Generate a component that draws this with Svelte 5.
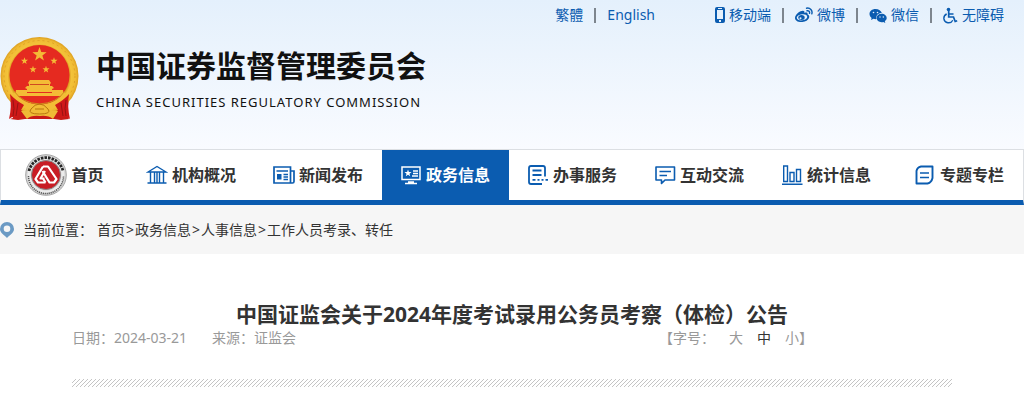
<script lang="ts">
	interface NavItem {
		label: string;
		icon: string;
	}

	const navItems: NavItem[] = [
		{ label: '首页', icon: 'home' },
		{ label: '机构概况', icon: 'bank' },
		{ label: '新闻发布', icon: 'news' },
		{ label: '政务信息', icon: 'screen' },
		{ label: '办事服务', icon: 'form' },
		{ label: '互动交流', icon: 'chat' },
		{ label: '统计信息', icon: 'chart' },
		{ label: '专题专栏', icon: 'doc' }
	];

	const crumbs = ['首页', '政务信息', '人事信息', '工作人员考录、转任'];
	const sizes = ['大', '中', '小'];

	let active = $state('screen');
	let fontSize = $state('中');

	function star(cx: number, cy: number, r: number): string {
		const points: string[] = [];
		for (let i = 0; i < 10; i++) {
			const radius = i % 2 ? r * 0.4 : r;
			const angle = (Math.PI * i) / 5 - Math.PI / 2;
			points.push(`${cx + radius * Math.cos(angle)},${cy + radius * Math.sin(angle)}`);
		}
		return points.join(' ');
	}
</script>

<header class="site-header">
	<div class="top-links">
		<div class="link-group">
			<a href="#tc">繁體</a>
			<i class="bar"></i>
			<a href="#en">English</a>
		</div>
		<div class="link-group">
			<a href="#mobile">
				<svg width="10" height="18" viewBox="0 0 10 18" aria-hidden="true">
					<path fill="#0b5cb0" fill-rule="evenodd" d="M2 1h6q2 0 2 2v12q0 2-2 2H2q-2 0-2-2V3q0-2 2-2zM2 4v9h6V4zM3 2v1h4V2zM4 14v2h2v-2z" />
				</svg>
				移动端
			</a>
			<i class="bar"></i>
			<a href="#weibo">
				<svg width="18" height="16" viewBox="0 0 18 16" aria-hidden="true">
					<path fill="#0b5cb0" fill-rule="evenodd" d="M7 4c1.700-.6 2.800.2 2.400 1.900 2-.8 3.700-.3 3.100 1.400 3.500 1.200 2 7.200-5.200 7.700C2.500 15.300 0 13.200 0 10.900 0 8 4.600 3.500 7 4zM7.200 7.200C3.800 7.500 1.600 9.300 1.800 11c.2 1.700 2.700 2.700 5.600 2.300 3.100-.4 5.100-2.200 4.800-3.900-.3-1.600-2.500-2.500-5-2.200z" />
					<ellipse cx="6.500" cy="10.500" rx="3.200" ry="2.500" fill="#0b5cb0" />
					<circle cx="5.500" cy="11.200" r="1" fill="#e9f2fc" />
					<path fill="none" stroke="#0b5cb0" stroke-width="1.400" stroke-linecap="round" d="M11.500 1.200c3.500-.8 6.400 2.200 5.300 5.700M12 3.800c1.700-.4 3 .9 2.500 2.600" />
				</svg>
				微博
			</a>
			<i class="bar"></i>
			<a href="#wechat">
				<svg width="18" height="16" viewBox="0 0 18 16" aria-hidden="true">
					<path fill="#0b5cb0" d="M6.500 2C2.900 2 .5 4.200.5 7c0 1.500.8 2.900 2.100 3.900L2 13l2.500-1.200c1 .3 2 .4 3 .3C6.700 8.500 9 6 12.800 6 12.200 3.700 9.800 2 6.500 2z" />
					<path fill="#0b5cb0" d="M12.600 6.800c-3 0-5 2-5 4.200s2 4.200 5 4.200c.6 0 1.200-.1 1.700-.3l2 1-.5-1.800c1.200-.8 1.900-1.900 1.900-3.100 0-2.200-2.200-4.200-5.100-4.200z" />
					<g fill="#e9f2fc"><circle cx="4.500" cy="5.500" r=".8" /><circle cx="8.500" cy="5.500" r=".8" /><circle cx="11" cy="10" r=".7" /><circle cx="14.300" cy="10" r=".7" /></g>
				</svg>
				微信
			</a>
			<i class="bar"></i>
			<a href="#access">
				<svg width="15" height="17" viewBox="0 0 15 17" aria-hidden="true">
					<circle cx="5.500" cy="2.500" r="1.800" fill="#0b5cb0" />
					<path fill="none" stroke="#0b5cb0" stroke-width="1.700" d="M5.700 4v6h4.800l1.700 4.500 2-.7M6 7h4.500" />
					<path fill="none" stroke="#0b5cb0" stroke-width="1.400" d="M3.700 7C1.500 8 .7 10 .9 11.800c.7 4.500 6.800 5.500 8.900 1.400" />
				</svg>
				无障碍
			</a>
		</div>
	</div>

	<div class="brand">
		<svg class="emblem" width="80" height="86" viewBox="0 0 80 86" aria-hidden="true">
			<defs>
				<radialGradient id="gold" cx=".5" cy=".5" r=".5">
					<stop offset=".76" stop-color="#d9951c" />
					<stop offset=".82" stop-color="#f3c33a" />
					<stop offset=".93" stop-color="#f0bb33" />
					<stop offset="1" stop-color="#dc9f20" />
				</radialGradient>
			</defs>
			<path fill="#c81a17" d="M11 60l2 22-3 1 8 1 7-1h29l7 1 8-1-2-4 2-19z" />
			<circle cx="39.500" cy="40" r="39" fill="url(#gold)" />
			<circle cx="39.500" cy="40" r="35.500" fill="none" stroke="#dfa126" stroke-width="1" stroke-dasharray="2 3" />
			<circle cx="39.500" cy="39" r="30" fill="#e52a20" />
			<g fill="#f4bb36">
				<polygon points={star(39.500, 18.500, 7.500)} />
				<polygon points={star(24.500, 25, 3.700)} />
				<polygon points={star(54, 25, 3.700)} />
				<polygon points={star(33, 33.500, 3.700)} />
				<polygon points={star(46, 33.500, 3.700)} />
				<path d="M30 44h19l2 3-1 1v2h2l2 2-2 1v3h-25v-3l-2-1 2-2h2v-2l-1-1z" />
				<path d="M15 53h12v3h25v-3h12v3H15z" opacity=".0" />
				<path d="M16 54h11v3h25v-3h11l1 6H15z" />
			</g>
			<path stroke="#cf4a20" stroke-width="1" d="M30 48.500h19" />
			<path fill="none" stroke="#f2bd35" stroke-width="7" d="M12 58q8 13 27.500 14Q59 71 67 58" />
			<path fill="none" stroke="#cf8f1c" stroke-width="1" d="M14 55q8 12 25.500 13Q57 67 65 55" />
			<g fill="#cf1918">
				<path d="M10 58q5 6 14 11l-3 5-4 8-5-1-3 2q3-12 1-25z" />
				<path d="M69 58q-5 6-14 11l3 5 3 8 6-1 3 2q-3-12-1-25z" />
			</g>
			<path stroke="#981313" stroke-width="1" fill="none" d="M13 64q2 9 0 16M18 67l-2 13M66 64q-2 9 0 16M61 67l2 13" />
			<path fill="#efba35" d="M21 75l13-1 5-3 6 3 13 1-5 8q-5-4-13-3-9-1-13 3z" />
			<path fill="none" stroke="#b8760f" d="M31 73q4-5 8.500-5t8.500 5-8.500 5-8.500-5zM35 73h9" />
		</svg>
		<div class="brand-text">
			<h1>中国证券监督管理委员会</h1>
			<p>CHINA SECURITIES REGULATORY COMMISSION</p>
		</div>
	</div>
</header>

<nav class="main-nav">
	{#each navItems as item}
		<a
			href="#{item.icon}"
			class:home={item.icon === 'home'}
			class:active={active === item.icon}
			onclick={() => (active = item.icon)}
		>
			{#if item.icon === 'home'}
				<svg width="42" height="42" viewBox="0 0 42 42" aria-hidden="true">
					<circle cx="21" cy="21" r="20.300" fill="#d6d6d6" stroke="#a5a5a5" />
					<circle cx="21" cy="21" r="17" fill="none" stroke="#ececec" stroke-width="3" />
					<path d="M4 17a17.500 17.500 0 0 1 34 0" fill="none" stroke="#252525" stroke-width="2.800" stroke-dasharray="2.600 1" />
					<path d="M3.500 22a17.500 17.500 0 0 0 35 0" fill="none" stroke="#555" stroke-width="1.500" stroke-dasharray="1.200 .8" />
					<circle cx="21" cy="21" r="14.500" fill="#c81c24" stroke="#888" />
					<g fill="none" stroke="#fff" stroke-width="2.200" stroke-linejoin="round">
						<path d="M18 12.500l-7.500 12.500 2.500 3.500h7.500" />
						<path d="M18 12.500h5l8.500 12.500-2.500 3.500h-4.500l-7-11.500" />
						<path d="M20 17l-4.500 7.500h4M20.500 28.500l-2.500-4" />
					</g>
				</svg>
			{:else}
				<svg width="22" height="20" viewBox="0 0 22 20" fill="none" stroke="currentColor" stroke-width="1.500" aria-hidden="true">
					{#if item.icon === 'bank'}
						<path d="M2 7L11 1.500 20 7zM4.500 7.500v10M8.500 7.500v10M13.500 7.500v10M17.500 7.500v10M11 7.500v10M1.500 18h19" stroke-width="1.400" />
					{:else if item.icon === 'news'}
						<path d="M1 2h16.500v16H1zM17.500 6H21v10.500q0 1.500-1.500 1.500h-2" stroke-width="1.700" />
						<path d="M3.500 6h11.500M10.500 9.500H15M10.500 12H15M10.500 14.500H15" />
						<path d="M4 9h4.500v5.500H4z" fill="currentColor" stroke="none" />
					{:else if item.icon === 'screen'}
						<path d="M2 2h18v12.500H2zM8 17h6M5 18.500h12" />
						<path d="M13 6h5M13 8.500h5M12 11h6" />
						<polygon points={star(8, 8.200, 3.800)} fill="currentColor" stroke="none" />
					{:else if item.icon === 'form'}
						<path d="M18 11.500V3q0-2-2-2H4Q2 1 2 3v14q0 2 2 2h11" stroke-width="1.800" />
						<path d="M5.500 5.500h9M5.500 10h9M5.500 14.800h3M10.500 14.800h2M14.500 14.800h2M18.500 14.800h2.500" stroke-width="1.800" />
					{:else if item.icon === 'chat'}
						<path d="M2 2h18.500v13H11l-3.500 3.500V15H2z" stroke-width="1.600" stroke-linejoin="round" />
						<path d="M5.500 6.500h11.500M5.500 10.500h7.500" stroke-width="1.600" />
					{:else if item.icon === 'chart'}
						<path d="M2.700 1h3.800v15.500H2.700zM9 7.500h4v9H9zM15.500 4.500h4v12h-4zM1 19.200h20.500" stroke-width="1.400" />
					{:else}
						<path d="M7 1.500h11.500v11.500q-1 4.500-5 5.500H2.500V6Q3 2.500 7 1.500z" stroke-width="1.900" stroke-linejoin="round" />
						<path d="M6 8h9M6 12.500h9" stroke-width="1.700" />
					{/if}
				</svg>
			{/if}
			{item.label}
		</a>
	{/each}
</nav>

<div class="breadcrumb">
	<svg width="14" height="18" viewBox="0 0 14 18" aria-hidden="true">
		<path fill="#6b9ac4" fill-rule="evenodd" d="M7 1a7 7 0 0 1 7 7c0 4-4 5.500-7 9-3-3.500-7-5-7-9a7 7 0 0 1 7-7zm0 3.500a3.300 3.300 0 1 0 0 6.600 3.300 3.300 0 0 0 0-6.600z" />
	</svg>
	<div class="location">
		<span>当前位置：</span>
		<div>
			{#each crumbs as crumb, i}{#if i > 0}<span class="sep">&gt;</span>{/if}<a href="#crumb-{i}">{crumb}</a>{/each}
		</div>
	</div>
</div>

<main class="article">
	<h2>中国证监会关于2024年度考试录用公务员考察（体检）公告</h2>
	<div class="meta">
		<div class="source">
			<span>日期：2024-03-21</span>
			<span>来源：证监会</span>
		</div>
		<div class="font-size">
			<span>【字号：</span>
			<div class="sizes">
				{#each sizes as size}
					<button type="button" class:selected={fontSize === size} onclick={() => (fontSize = size)}>{size}</button>
				{/each}
			</div>
			<span>】</span>
		</div>
	</div>
	<div class="divider"></div>
</main>

<style>
	:global(body) {
		margin: 0;
		background: #fff;
		color: #333;
		font-family: 'Noto Sans', 'Noto Sans CJK SC', sans-serif;
		font-size: 14px;
		line-height: 20px;
	}

	a {
		color: inherit;
		text-decoration: none;
	}

	svg {
		flex: none;
	}

	.site-header {
		background: linear-gradient(#e4f0fc, #f9fbff);
		padding-bottom: 27px;
	}

	.top-links {
		display: flex;
		justify-content: flex-end;
		gap: 60px;
		padding: 5px 20px 0 0;
		color: #0b5cb0;
	}

	.link-group {
		display: flex;
		align-items: center;
		gap: 11px;
	}

	.link-group a {
		display: flex;
		align-items: center;
		gap: 4px;
	}

	.bar {
		width: 2px;
		height: 15px;
		background: #7d858e;
	}

	.brand {
		display: flex;
		align-items: center;
		gap: 16px;
		padding-top: 11px;
	}

	.brand-text {
		color: #111;
	}

	h1 {
		margin: 0;
		font-size: 30px;
		line-height: 40px;
	}

	.brand-text p {
		margin: 6px 0 0;
		font-size: 13px;
		letter-spacing: 1px;
	}

	.main-nav {
		display: grid;
		grid-template-columns: repeat(7, 127px) 1fr;
		border: 1px solid #dcdfe3;
		border-bottom: 5px solid #0b5cb0;
	}

	.main-nav a {
		display: flex;
		align-items: center;
		justify-content: flex-end;
		gap: 4px;
		height: 50px;
		padding-right: 19px;
		font-size: 16px;
		font-weight: 700;
		white-space: nowrap;
	}

	.main-nav .home {
		justify-content: center;
		padding: 0;
	}

	.main-nav svg {
		color: #0b5cb0;
	}

	.main-nav .active,
	.main-nav .active svg {
		background: #0b5cb0;
		color: #fff;
	}

	.breadcrumb {
		display: flex;
		align-items: center;
		gap: 9px;
		padding: 15px 0 14px;
		background: #f6f6f6;
	}

	.location {
		display: flex;
		gap: 4px;
	}

	.sep {
		padding: 0 1px;
	}

	.article {
		padding: 46px 72px 14px;
	}

	h2 {
		margin: 0;
		font-size: 21px;
		line-height: 28px;
		text-align: center;
	}

	.meta {
		display: flex;
		justify-content: space-between;
		padding-right: 139px;
		color: #999;
	}

	.source {
		display: flex;
		gap: 25px;
	}

	.font-size {
		display: flex;
	}

	.sizes {
		display: flex;
		gap: 14px;
		padding-left: 14px;
	}

	button {
		padding: 0;
		border: 0;
		background: none;
		color: inherit;
		font: inherit;
		cursor: pointer;
	}

	.selected {
		color: #333;
	}

	.divider {
		height: 8px;
		margin-top: 31px;
		background: linear-gradient(135deg, #fff 38%, #c4c4c4 50%, #fff 62%);
		background-size: 4px 4px;
	}
</style>
